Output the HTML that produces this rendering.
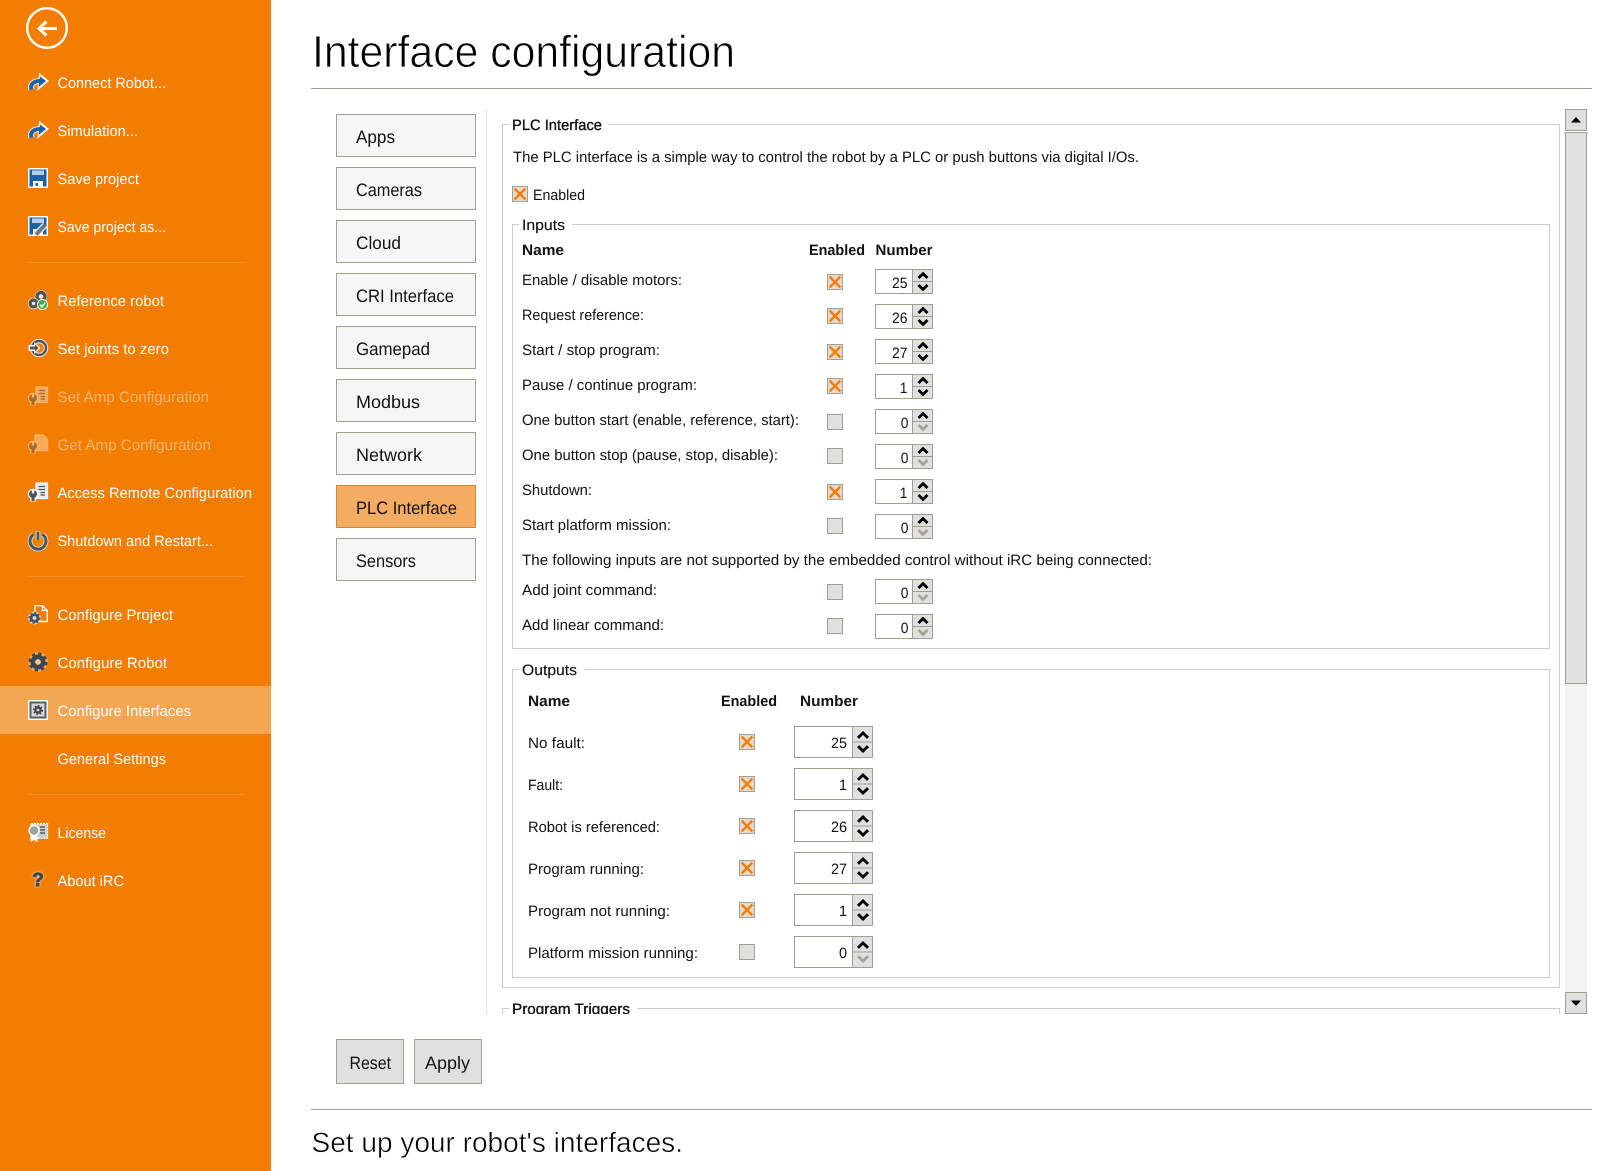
<!DOCTYPE html>
<html lang="en">
<head>
<meta charset="utf-8">
<title>Interface configuration</title>
<style>
html,body{margin:0;padding:0;background:#fff;width:1606px;height:1171px;overflow:hidden}
svg{display:block}
text{font-family:"Liberation Sans",sans-serif;font-size:15px;fill:#111;text-rendering:geometricPrecision}
.n text,text.n{fill:#fff}
.t{font-size:18px}
.b{font-weight:bold}
.m{stroke:#111;stroke-width:.35px}
.m2{stroke:#111;stroke-width:.15px}
.g{fill:none;stroke:#ccc;stroke-width:1}
.num{text-anchor:end}
</style>
</head>
<body>
<svg width="1606" height="1171" viewBox="0 0 1606 1171" xmlns="http://www.w3.org/2000/svg" shape-rendering="auto">
<defs>
  <g id="cc"><rect x=".5" y=".5" width="15" height="15" fill="#e4dbd0" stroke="#a49e92"/><path d="M2.6 2.6L13.4 13.4M13.4 2.6L2.6 13.4" stroke="#f27d00" stroke-width="2.4" fill="none"/></g>
  <g id="cu"><rect x=".5" y=".5" width="15" height="15" fill="#e0e0e0" stroke="#a49e92"/></g>
  <g id="s">
    <rect x=".5" y=".5" width="57" height="24" fill="#fff" stroke="#a49e92"/>
    <rect x="38" y="1" width="19" height="23" fill="#e0e0e0"/>
    <path d="M37.5 0V25M38 12.5H58" stroke="#a49e92" fill="none"/>
    <path d="M43.5 9L48 4.6L52.5 9" stroke="#000" stroke-width="2.8" fill="none"/>
    <path d="M43.5 16L48 20.4L52.5 16" stroke="#000" stroke-width="2.8" fill="none"/>
  </g>
  <g id="sd">
    <rect x=".5" y=".5" width="57" height="24" fill="#fff" stroke="#a49e92"/>
    <rect x="38" y="1" width="19" height="23" fill="#e0e0e0"/>
    <path d="M37.5 0V25M38 12.5H58" stroke="#a49e92" fill="none"/>
    <path d="M43.5 9L48 4.6L52.5 9" stroke="#000" stroke-width="2.8" fill="none"/>
    <path d="M43.5 16L48 20.4L52.5 16" stroke="#a8a296" stroke-width="2.8" fill="none"/>
  </g>
  <g id="l">
    <rect x=".5" y=".5" width="78" height="31" fill="#fff" stroke="#a49e92"/>
    <rect x="59" y="1" width="19" height="30" fill="#e0e0e0"/>
    <path d="M58.5 0V32M59 16H79" stroke="#a49e92" fill="none"/>
    <path d="M64 11.8L69 7L74 11.8" stroke="#000" stroke-width="2.9" fill="none"/>
    <path d="M64 20.2L69 25L74 20.2" stroke="#000" stroke-width="2.9" fill="none"/>
  </g>
  <g id="ld">
    <rect x=".5" y=".5" width="78" height="31" fill="#fff" stroke="#a49e92"/>
    <rect x="59" y="1" width="19" height="30" fill="#e0e0e0"/>
    <path d="M58.5 0V32M59 16H79" stroke="#a49e92" fill="none"/>
    <path d="M64 11.8L69 7L74 11.8" stroke="#000" stroke-width="2.9" fill="none"/>
    <path d="M64 20.2L69 25L74 20.2" stroke="#a8a296" stroke-width="2.9" fill="none"/>
  </g>
  <g id="arrow">
    <path d="M3.5 17C1.5 11 6 8 12 8" fill="none" stroke="#fff" stroke-width="6" opacity=".85"/>
    <path d="M12 1.5L19.5 8L10.5 15.5Z" fill="#fff" stroke="#fff" stroke-width="2" opacity=".85"/>
    <path d="M3.5 17C1.5 11 6 8 12 8" fill="none" stroke="#1a62a8" stroke-width="4"/>
    <path d="M12 3.5L18 8L10.5 14Z" fill="#1a62a8"/>
  </g>
  <g id="floppy">
    <rect width="20" height="20" rx="1" fill="#fff"/>
    <rect x="1.5" y="1.5" width="17" height="17" fill="#1a62a8"/>
    <rect x="4" y="2.5" width="12" height="4.5" fill="#b9cfe6"/>
    <rect x="5" y="13" width="10" height="6" fill="#fff"/>
    <rect x="7.5" y="15" width="2.5" height="3" fill="#1a62a8"/>
  </g>
  <g id="wrench">
    <path d="M5 10V19.5" stroke="#fff" stroke-width="5.4" fill="none"/>
    <circle cx="5" cy="12" r="5.2" fill="#fff"/>
    <circle cx="5" cy="12" r="4" fill="#4a5560"/>
    <path d="M5 12V19" stroke="#4a5560" stroke-width="3" fill="none"/>
    <path d="M5 7.5V11.5" stroke="#fff" stroke-width="2.4" fill="none"/>
  </g>
  <g id="doclines">
    <rect x="8" y="1" width="11.5" height="15.5" fill="#ececec" stroke="#fff" stroke-width="1.2"/>
    <path d="M10.5 4.5H17M10.5 7.5H17M12.5 10.5H17M12.5 13H17" stroke="#4a5560" stroke-width="1.2" fill="none"/>
  </g>
</defs>

<!-- Sidebar -->
<rect width="271" height="1171" fill="#f27d00"/>
<rect y="686" width="271" height="48" fill="#f4a653"/>
<circle cx="47" cy="28" r="19.8" fill="none" stroke="#fff" stroke-width="2.4"/>
<path d="M39 28.5H57" stroke="#fff" stroke-width="3" fill="none"/>
<path d="M46.5 21.5L39 28.5L46.5 35.5" stroke="#fff" stroke-width="3" fill="none"/>

<g class="n">
<text x="57.5" y="88" textLength="108.5" lengthAdjust="spacingAndGlyphs">Connect Robot...</text>
<text x="57.5" y="136" textLength="80.5" lengthAdjust="spacingAndGlyphs">Simulation...</text>
<text x="57.5" y="184" textLength="81.5" lengthAdjust="spacingAndGlyphs">Save project</text>
<text x="57.5" y="232" textLength="108.5" lengthAdjust="spacingAndGlyphs">Save project as...</text>
<text x="57.5" y="306" textLength="106.5" lengthAdjust="spacingAndGlyphs">Reference robot</text>
<text x="57.5" y="354" textLength="111.5" lengthAdjust="spacingAndGlyphs">Set joints to zero</text>
<text x="57.5" y="402" textLength="151.5" lengthAdjust="spacingAndGlyphs" opacity=".42">Set Amp Configuration</text>
<text x="57.5" y="450" textLength="153.5" lengthAdjust="spacingAndGlyphs" opacity=".42">Get Amp Configuration</text>
<text x="57.5" y="498" textLength="194.5" lengthAdjust="spacingAndGlyphs">Access Remote Configuration</text>
<text x="57.5" y="546" textLength="155.5" lengthAdjust="spacingAndGlyphs">Shutdown and Restart...</text>
<text x="57.5" y="620" textLength="115.5" lengthAdjust="spacingAndGlyphs">Configure Project</text>
<text x="57.5" y="668" textLength="109.5" lengthAdjust="spacingAndGlyphs">Configure Robot</text>
<text x="57.5" y="716" textLength="133.5" lengthAdjust="spacingAndGlyphs">Configure Interfaces</text>
<text x="57.5" y="764" textLength="108.5" lengthAdjust="spacingAndGlyphs">General Settings</text>
<text x="57.5" y="838" textLength="48.5" lengthAdjust="spacingAndGlyphs">License</text>
<text x="57.5" y="886" textLength="66.5" lengthAdjust="spacingAndGlyphs">About iRC</text>
</g>
<path d="M28 262.5H245M28 576.5H245M28 794.5H245" stroke="#f38f26" fill="none"/>

<!-- Sidebar icons -->
<use href="#arrow" transform="translate(28,73)"/>
<use href="#arrow" transform="translate(28,121)"/>
<use href="#floppy" transform="translate(28,168)"/>
<g transform="translate(28,216)">
  <use href="#floppy"/>
  <path d="M8 18.5L17 9" stroke="#d8dde2" stroke-width="6.5" fill="none"/>
  <path d="M8 18.5L17 9" stroke="#6d7680" stroke-width="3.6" fill="none"/>
</g>
<g transform="translate(28,290)">
  <circle cx="13" cy="6.5" r="6.2" fill="#fff" opacity=".8"/>
  <circle cx="13" cy="6.5" r="4" fill="none" stroke="#4f555c" stroke-width="3.4"/>
  <circle cx="5.5" cy="13.5" r="5.8" fill="#fff" opacity=".8"/>
  <circle cx="5.5" cy="13.5" r="3.4" fill="none" stroke="#4f555c" stroke-width="3.4"/>
  <circle cx="14.5" cy="14.5" r="5.5" fill="#fff"/>
  <circle cx="14.5" cy="14.5" r="4.5" fill="#3ba946"/>
  <path d="M12 14.5L14 16.8L17.2 12.6" stroke="#fff" stroke-width="1.6" fill="none"/>
</g>
<g transform="translate(28,339)">
  <circle cx="11" cy="9" r="7" fill="#f27d00" stroke="#e8e8e8" stroke-width="4.4"/>
  <circle cx="11" cy="9" r="7" fill="none" stroke="#4a5560" stroke-width="2.4"/>
  <path d="M0.5 6H6V3L12.5 9L6 15V12H0.5Z" fill="#fff"/>
  <path d="M2 7.5H7V5.3L10.7 9L7 12.7V10.5H2Z" fill="#4a5560"/>
</g>
<g transform="translate(28,386)" opacity=".42"><use href="#doclines"/><use href="#wrench"/></g>
<g transform="translate(28,434)" opacity=".42">
  <path d="M7 1H15L19.5 5.5V16.5H7Z" fill="#ffe9d2" stroke="#fff" stroke-width="1.4"/>
  <use href="#wrench"/>
</g>
<g transform="translate(28,482)"><use href="#doclines"/><use href="#wrench"/></g>
<g transform="translate(28,530)">
  <path d="M5.5 4.5A8 8 0 1 0 14.5 4.5" fill="none" stroke="#ddd" stroke-width="4.8"/>
  <path d="M10 1V10" stroke="#ddd" stroke-width="4.6" fill="none"/>
  <path d="M5.5 4.5A8 8 0 1 0 14.5 4.5" fill="none" stroke="#4a5560" stroke-width="3"/>
  <path d="M10 1.5V10" stroke="#4a5560" stroke-width="2.8" fill="none"/>
</g>
<g transform="translate(28,605)">
  <path d="M7 .7H14.5L19.3 5.5V16.5H7Z" fill="#f27d00" stroke="#fff" stroke-width="1.4"/>
  <path d="M14.5 .7V5.5H19.3" fill="none" stroke="#fff" stroke-width="1.2"/>
  <circle cx="6.5" cy="13" r="6.4" fill="#ddd"/>
  <circle cx="6.5" cy="13" r="3.4" fill="none" stroke="#4a5560" stroke-width="3"/>
  <circle cx="6.5" cy="13" r="5.2" fill="none" stroke="#4a5560" stroke-width="1.6" stroke-dasharray="2 2"/>
</g>
<g>
  <circle cx="38" cy="662" r="10" fill="#f7c48e" opacity=".55"/>
  <circle cx="38" cy="662" r="5.2" fill="none" stroke="#3d4650" stroke-width="4.6"/>
  <circle cx="38" cy="662" r="8.3" fill="none" stroke="#3d4650" stroke-width="2.6" stroke-dasharray="3.3 3.2"/>
  <circle cx="38" cy="662" r="2.7" fill="#f7c48e"/>
</g>
<g transform="translate(28,700)">
  <rect width="20" height="20" fill="#fff"/>
  <rect x="1.5" y="1.5" width="17" height="17" fill="#59606a"/>
  <rect x="3.5" y="3.5" width="13" height="13" fill="#d8d8d8"/>
  <circle cx="10" cy="10" r="2.6" fill="none" stroke="#3d4650" stroke-width="2.4"/>
  <circle cx="10" cy="10" r="4.4" fill="none" stroke="#3d4650" stroke-width="1.4" stroke-dasharray="1.7 1.7"/>
</g>
<g transform="translate(28,823)">
  <rect x="3" y=".7" width="16.5" height="14.6" fill="#c9cccb" stroke="#fff" stroke-width="1.4" stroke-dasharray="2 1"/>
  <path d="M12 4H17M12 7H17M12 10H17" stroke="#59606a" stroke-width="1.4" fill="none"/>
  <path d="M2.5 9V19L6 17L9.5 19V9Z" fill="#fff"/>
  <circle cx="6" cy="7.5" r="5" fill="#9aa29f" stroke="#fff" stroke-width="1.4"/>
</g>
<text x="38" y="886" text-anchor="middle" style="font-size:19px;font-weight:bold;fill:#3d4650;stroke:#3d4650;stroke-width:.9px;filter:drop-shadow(0 0 1px #fff)">?</text>

<!-- Header -->
<text x="312" y="67" textLength="423" lengthAdjust="spacingAndGlyphs" style="font-size:45px;fill:#000;stroke:#fff;stroke-width:.8px">Interface configuration</text>
<rect x="311" y="88" width="1281" height="1" fill="#a49e92"/>

<!-- Tabs -->
<g fill="#f6f6f6" stroke="#a49e92">
<rect x="336.5" y="114.5" width="139" height="42"/>
<rect x="336.5" y="167.5" width="139" height="42"/>
<rect x="336.5" y="220.5" width="139" height="42"/>
<rect x="336.5" y="273.5" width="139" height="42"/>
<rect x="336.5" y="326.5" width="139" height="42"/>
<rect x="336.5" y="379.5" width="139" height="42"/>
<rect x="336.5" y="432.5" width="139" height="42"/>
<rect x="336.5" y="485.5" width="139" height="42" fill="#f4ac62" stroke="#cc8a40"/>
<rect x="336.5" y="538.5" width="139" height="42"/>
</g>
<g class="tabs">
<text class="t" x="356" y="143" textLength="39" lengthAdjust="spacingAndGlyphs">Apps</text>
<text class="t" x="356" y="196" textLength="66" lengthAdjust="spacingAndGlyphs">Cameras</text>
<text class="t" x="356" y="249" textLength="45" lengthAdjust="spacingAndGlyphs">Cloud</text>
<text class="t" x="356" y="302" textLength="98" lengthAdjust="spacingAndGlyphs">CRI Interface</text>
<text class="t" x="356" y="355" textLength="74" lengthAdjust="spacingAndGlyphs">Gamepad</text>
<text class="t" x="356" y="408" textLength="64" lengthAdjust="spacingAndGlyphs">Modbus</text>
<text class="t" x="356" y="461" textLength="66" lengthAdjust="spacingAndGlyphs">Network</text>
<text class="t" x="356" y="514" textLength="101" lengthAdjust="spacingAndGlyphs">PLC Interface</text>
<text class="t" x="356" y="567" textLength="60" lengthAdjust="spacingAndGlyphs">Sensors</text>
</g>

<rect x="486" y="109" width="1" height="905" fill="#e2e2e2"/>

<!-- Group boxes -->
<path class="g" d="M509 124.5H502.5V987.5H1559.5V124.5H608"/>
<text class="m" x="512" y="130" textLength="90" lengthAdjust="spacingAndGlyphs">PLC Interface</text>
<text x="513" y="162" textLength="626" lengthAdjust="spacingAndGlyphs">The PLC interface is a simple way to control the robot by a PLC or push buttons via digital I/Os.</text>
<use href="#cc" x="512" y="186"/>
<text x="533" y="200" textLength="52" lengthAdjust="spacingAndGlyphs">Enabled</text>

<path class="g" d="M519 224.5H512.5V648.5H1549.5V224.5H572"/>
<text class="m2" x="522" y="230" textLength="43" lengthAdjust="spacingAndGlyphs">Inputs</text>
<text class="b" x="522" y="255" textLength="42" lengthAdjust="spacingAndGlyphs">Name</text>
<text class="b" x="809" y="255" textLength="56" lengthAdjust="spacingAndGlyphs">Enabled</text>
<text class="b" x="875.5" y="255" textLength="57" lengthAdjust="spacingAndGlyphs">Number</text>

<text x="522" y="285" textLength="160" lengthAdjust="spacingAndGlyphs">Enable / disable motors:</text>
<text x="522" y="320" textLength="122" lengthAdjust="spacingAndGlyphs">Request reference:</text>
<text x="522" y="355" textLength="138" lengthAdjust="spacingAndGlyphs">Start / stop program:</text>
<text x="522" y="390" textLength="175" lengthAdjust="spacingAndGlyphs">Pause / continue program:</text>
<text x="522" y="425" textLength="277" lengthAdjust="spacingAndGlyphs">One button start (enable, reference, start):</text>
<text x="522" y="460" textLength="256" lengthAdjust="spacingAndGlyphs">One button stop (pause, stop, disable):</text>
<text x="522" y="495" textLength="70" lengthAdjust="spacingAndGlyphs">Shutdown:</text>
<text x="522" y="530" textLength="149" lengthAdjust="spacingAndGlyphs">Start platform mission:</text>
<text x="522" y="565" textLength="630" lengthAdjust="spacingAndGlyphs">The following inputs are not supported by the embedded control without iRC being connected:</text>
<text x="522" y="595" textLength="135" lengthAdjust="spacingAndGlyphs">Add joint command:</text>
<text x="522" y="630" textLength="142" lengthAdjust="spacingAndGlyphs">Add linear command:</text>

<use href="#cc" x="827" y="274"/>
<use href="#cc" x="827" y="308"/>
<use href="#cc" x="827" y="344"/>
<use href="#cc" x="827" y="378"/>
<use href="#cu" x="827" y="414"/>
<use href="#cu" x="827" y="448"/>
<use href="#cc" x="827" y="484"/>
<use href="#cu" x="827" y="518"/>
<use href="#cu" x="827" y="584"/>
<use href="#cu" x="827" y="618"/>

<use href="#s" x="875" y="269"/>
<use href="#s" x="875" y="304"/>
<use href="#s" x="875" y="339"/>
<use href="#s" x="875" y="374"/>
<use href="#sd" x="875" y="409"/>
<use href="#sd" x="875" y="444"/>
<use href="#s" x="875" y="479"/>
<use href="#sd" x="875" y="514"/>
<use href="#sd" x="875" y="579"/>
<use href="#sd" x="875" y="614"/>

<g>
<text class="num" x="907.5" y="288" textLength="15.5" lengthAdjust="spacingAndGlyphs">25</text>
<text class="num" x="907.5" y="323" textLength="15.5" lengthAdjust="spacingAndGlyphs">26</text>
<text class="num" x="907.5" y="358" textLength="15.5" lengthAdjust="spacingAndGlyphs">27</text>
<text class="num" x="907.5" y="393" textLength="7.7" lengthAdjust="spacingAndGlyphs">1</text>
<text class="num" x="908.5" y="428" textLength="7.7" lengthAdjust="spacingAndGlyphs">0</text>
<text class="num" x="908.5" y="463" textLength="7.7" lengthAdjust="spacingAndGlyphs">0</text>
<text class="num" x="907.5" y="498" textLength="7.7" lengthAdjust="spacingAndGlyphs">1</text>
<text class="num" x="908.5" y="533" textLength="7.7" lengthAdjust="spacingAndGlyphs">0</text>
<text class="num" x="908.5" y="598" textLength="7.7" lengthAdjust="spacingAndGlyphs">0</text>
<text class="num" x="908.5" y="633" textLength="7.7" lengthAdjust="spacingAndGlyphs">0</text>
</g>

<path class="g" d="M519 669.5H512.5V977.5H1549.5V669.5H585"/>
<text class="m2" x="522" y="675" textLength="55" lengthAdjust="spacingAndGlyphs">Outputs</text>
<text class="b" x="528" y="706" textLength="42" lengthAdjust="spacingAndGlyphs">Name</text>
<text class="b" x="721" y="706" textLength="56" lengthAdjust="spacingAndGlyphs">Enabled</text>
<text class="b" x="800" y="706" textLength="58" lengthAdjust="spacingAndGlyphs">Number</text>

<text x="528" y="748" textLength="57" lengthAdjust="spacingAndGlyphs">No fault:</text>
<text x="528" y="790" textLength="35" lengthAdjust="spacingAndGlyphs">Fault:</text>
<text x="528" y="832" textLength="132" lengthAdjust="spacingAndGlyphs">Robot is referenced:</text>
<text x="528" y="874" textLength="116" lengthAdjust="spacingAndGlyphs">Program running:</text>
<text x="528" y="916" textLength="142" lengthAdjust="spacingAndGlyphs">Program not running:</text>
<text x="528" y="958" textLength="170" lengthAdjust="spacingAndGlyphs">Platform mission running:</text>

<use href="#cc" x="739" y="734"/>
<use href="#cc" x="739" y="776"/>
<use href="#cc" x="739" y="818"/>
<use href="#cc" x="739" y="860"/>
<use href="#cc" x="739" y="902"/>
<use href="#cu" x="739" y="944"/>

<use href="#l" x="794" y="726"/>
<use href="#l" x="794" y="768"/>
<use href="#l" x="794" y="810"/>
<use href="#l" x="794" y="852"/>
<use href="#l" x="794" y="894"/>
<use href="#ld" x="794" y="936"/>

<text class="num" x="847" y="748" textLength="16" lengthAdjust="spacingAndGlyphs">25</text>
<text class="num" x="847" y="790" textLength="8" lengthAdjust="spacingAndGlyphs">1</text>
<text class="num" x="847" y="832" textLength="16" lengthAdjust="spacingAndGlyphs">26</text>
<text class="num" x="847" y="874" textLength="16" lengthAdjust="spacingAndGlyphs">27</text>
<text class="num" x="847" y="916" textLength="8" lengthAdjust="spacingAndGlyphs">1</text>
<text class="num" x="847" y="958" textLength="8" lengthAdjust="spacingAndGlyphs">0</text>

<!-- Clipped next group -->
<clipPath id="clip"><rect x="490" y="1000" width="1080" height="14"/></clipPath>
<g clip-path="url(#clip)">
<path class="g" d="M509 1008.5H502.5V1020M637 1008.5H1559.5V1020"/>
<text class="m" x="512" y="1014" textLength="118" lengthAdjust="spacingAndGlyphs">Program Triggers</text>
</g>

<!-- Scrollbar -->
<rect x="1565" y="132" width="22" height="882" fill="#f3f3f3"/>
<path d="M1565.5 132V1014M1586.5 132V1014" stroke="#ececec" fill="none"/>
<rect x="1565.5" y="109.5" width="21" height="21" fill="#e0e0e0" stroke="#a49e92"/>
<path d="M1571 122.5H1581L1576 117Z" fill="#000"/>
<rect x="1565.5" y="132.5" width="21" height="551" fill="#e0e0e0" stroke="#a49e92"/>
<rect x="1565.5" y="992.5" width="21" height="21" fill="#e0e0e0" stroke="#a49e92"/>
<path d="M1571 1000.5H1581L1576 1006Z" fill="#000"/>

<!-- Buttons -->
<rect x="336.5" y="1039.5" width="67" height="44" fill="#e0e0e0" stroke="#a49e92"/>
<rect x="414.5" y="1039.5" width="67" height="44" fill="#e0e0e0" stroke="#a49e92"/>
<text class="t" x="349.5" y="1069" textLength="41.5" lengthAdjust="spacingAndGlyphs">Reset</text>
<text class="t" x="425" y="1069" textLength="45" lengthAdjust="spacingAndGlyphs">Apply</text>

<!-- Footer -->
<rect x="311" y="1109" width="1281" height="1" fill="#a49e92"/>
<text x="311.5" y="1152" textLength="371.5" lengthAdjust="spacingAndGlyphs" style="font-size:28px;fill:#000;stroke:#fff;stroke-width:.5px">Set up your robot's interfaces.</text>
</svg>
</body>
</html>
